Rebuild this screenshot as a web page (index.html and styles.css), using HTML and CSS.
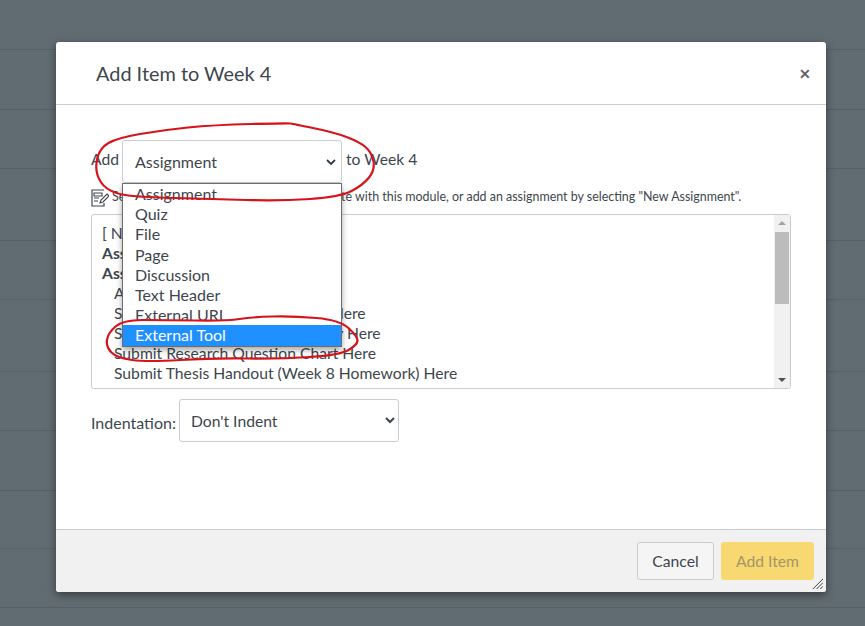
FILE: index.html
```html
<!DOCTYPE html>
<html lang="en">
<head>
<meta charset="utf-8">
<title>Add Item to Week 4</title>
<link rel="stylesheet" href="styles.css">
</head>
<body>
<div class="backdrop">
  <div class="bg-row first"></div><div class="bg-row wide"></div><div class="bg-row"></div><div class="bg-row tall"></div><div class="bg-row"></div><div class="bg-row tall"></div><div class="bg-row"></div><div class="bg-row wide"></div><div class="bg-row short"></div><div class="bg-row"></div>
</div>
<div class="modal">
  <header class="modal-head">
    <h1 class="modal-title">Add Item to Week 4</h1>
    <span class="close">&#10005;</span>
  </header>
  <main class="modal-body">
    <div class="add-row">
      <span class="add-label">Add</span>
      <div class="fake-select"><span>Assignment</span>
        <svg class="chev" viewBox="0 0 10 6"><path d="M1 1l4 4 4-4" fill="none" stroke="#2d3b45" stroke-width="1.8"/></svg>
      </div>
      <span class="add-label">to Week 4</span>
    </div>
    <div class="help">
      <svg class="help-icon" viewBox="0 0 18 18"><path d="M13 1H1v16h12v-3" fill="none" stroke="#3d464d" stroke-width="1.2"/><path d="M3 4h8v3H3zM3 9h5M3 12h4" fill="none" stroke="#3d464d" stroke-width="1.1"/><path d="M9 14l1-3 6-6 2 2-6 6z" fill="#fff" stroke="#3d464d" stroke-width="1.1"/></svg>
      <span>Select the assignment you want to associate with this module, or add an assignment by selecting "New Assignment".</span>
    </div>
    <div class="listbox">
      <div class="list-text">
        <div class="item">[ New Assignment ]</div>
        <div class="item group">Assignments</div>
        <div class="item group">Assignments</div>
        <div class="item sub">Assignment Overview</div>
        <div class="item sub">Submit Annotated Bibliography Here</div>
        <div class="item sub">Submit Literature Review Activity Here</div>
        <div class="item sub">Submit Research Question Chart Here</div>
        <div class="item sub">Submit Thesis Handout (Week 8 Homework) Here</div>
      </div>
      <div class="scrollbar">
        <span class="arrow-up"></span>
        <div class="track"><div class="thumb"></div></div>
        <span class="arrow-down"></span>
      </div>
    </div>
    <div class="indent-row">
      <label class="indent-label" for="indent">Indentation:</label>
      <select id="indent" class="indent-select"><option>Don't Indent</option></select>
    </div>
  </main>
  <footer class="modal-foot">
    <button class="btn cancel">Cancel</button>
    <button class="btn primary">Add Item</button>
    <svg class="grip" viewBox="0 0 12 12"><path d="M1 12L12 1M5 12l7-7M9 12l3-3" stroke="#333" stroke-width="1" fill="none"/></svg>
  </footer>
  <ul class="dropdown">
    <li>Assignment</li><li>Quiz</li><li>File</li><li>Page</li><li>Discussion</li><li>Text Header</li><li>External URL</li><li class="active">External Tool</li>
  </ul>
</div>
<svg class="scribble" viewBox="0 0 865 626">
  <path d="M251 124Q213 125 188 127.5Q163 130 140 134Q117 138 108.5 143Q100 148 97.5 157.5Q95 167 97.5 175Q100 183 106.5 188Q113 193 125 195Q137 197 175 198Q213 199 246.5 200Q280 201 310 199Q340 197 351.5 191Q363 185 369 177.5Q375 170 373.5 161.5Q372 153 366 147.5Q360 142 346.5 137Q333 132 313 128Q293 124 291 123.5Q290 123 251 124Z"/>
  <path d="M239.5 319Q227 321 195 320.5Q163 320 143 320Q123 320 115.5 326.5Q108 333 107 340Q106 347 111.5 352.5Q117 358 132 360Q147 362 180 360Q213 358 246.5 358.5Q280 359 310 357Q340 355 348.5 350Q357 345 357.5 341Q358 337 349 328.5Q340 320 316.5 318Q293 316 272.5 316.5Q252 317 239.5 319Z"/>
</svg>
</body>
</html>
```
FILE: styles.css
```css
* { box-sizing: border-box; }
html, body { margin: 0; height: 100%; overflow: hidden; }
body { background: #616c72; font-family: Lato, "Liberation Sans", sans-serif; color: #3d464d; }
.bg-row { height: 59px; border-bottom: 1px solid #566166; }
.first { height: 50px; }
.wide { height: 60px; }
.tall { height: 72px; }
.short { height: 58px; }
.modal { position: absolute; left: 56px; top: 42px; width: 770px; height: 550px; background: #fff; border-radius: 3px; box-shadow: 0 3px 8px rgba(0,0,0,.45); display: flex; flex-direction: column; }
.modal-head { height: 63px; flex: none; border-bottom: 1px solid #c7cdd1; display: flex; align-items: center; justify-content: space-between; padding: 0 15px 0 40px; }
.modal-title { margin: 0; font-size: 19.9px; font-weight: 400; }
.close { font-size: 14px; font-weight: 700; color: #5f666b; }
.modal-body { flex: 1; padding: 34px 35px 0; font-size: 15.7px; }
.add-row { display: flex; align-items: center; gap: 3px; height: 43px; }
.add-label { padding-bottom: 4px; }
.fake-select { flex: none; width: 220px; height: 43px; border: 1px solid #c7cdd1; border-radius: 3px; padding: 1px 5px 0 12px; margin: 1px 1px 0 0; font-size: 16px; display: flex; align-items: center; justify-content: space-between; }
.chev { width: 10px; height: 6px; }
.help { display: flex; align-items: center; gap: 3px; font-size: 12.45px; height: 20px; margin-top: 4px; }
.help-icon { width: 18px; height: 18px; flex: none; margin-top: 3px; }
.listbox { display: flex; width: 700px; height: 175px; border: 1px solid #c7cdd1; border-radius: 3px; margin-top: 8px; }
.list-text { flex: 1; padding: 8px 10px; overflow: hidden; }
.item { height: 20px; line-height: 20px; white-space: nowrap; }
.group { font-weight: 700; }
.sub { padding-left: 12px; }
.scrollbar { width: 16px; background: #f1f1f1; display: flex; flex-direction: column; align-items: center; }
.arrow-up, .arrow-down { width: 0; height: 0; border-left: 4px solid transparent; border-right: 4px solid transparent; margin: 6px 0; }
.arrow-up { border-bottom: 4px solid #a3a3a3; }
.arrow-down { border-top: 4px solid #505050; }
.track { flex: 1; align-self: stretch; padding: 1px 1px 0 1px; }
.thumb { height: 72px; background: #bcbcbc; }
.indent-row { display: flex; align-items: center; gap: 3px; margin-top: 10px; }
.indent-label { font-size: 16px; padding-top: 4px; }
.indent-select { width: 220px; height: 43px; border: 1px solid #c7cdd1; border-radius: 3px; background: #fff; font: inherit; color: inherit; padding: 0 7px; }
.modal-foot { height: 63px; flex: none; position: relative; background: #f1f1f1; border-top: 1px solid #c7cdd1; border-radius: 0 0 3px 3px; display: flex; align-items: center; justify-content: flex-end; gap: 7px; padding: 0 12px 0 0; }
.btn { font-family: inherit; font-size: 15.7px; height: 38px; width: 93px; padding: 0; border: 1px solid #c7cdd1; border-radius: 3px; background: #f5f5f5; color: #3d464d; }
.cancel { width: 77px; }
.primary { background: #f7d871; border-color: #f7d871; color: #a69468; }
.grip { position: absolute; right: 3px; bottom: 3px; width: 11px; height: 11px; }
.dropdown { position: absolute; left: 66px; top: 141px; width: 220px; height: 164px; margin: 0; padding: 0; list-style: none; background: #fff; border: 1px solid #6d6d6d; box-shadow: 0 3px 6px rgba(0,0,0,.35); font-size: 16px; }
.dropdown li { height: 20.2px; line-height: 20px; padding-left: 12px; }
.dropdown .active { background: #1e90ff; color: #fff; }
.scribble { position: absolute; inset: 0; width: 865px; height: 626px; pointer-events: none; fill: none; stroke: #d8121b; stroke-width: 2.2; }
```
